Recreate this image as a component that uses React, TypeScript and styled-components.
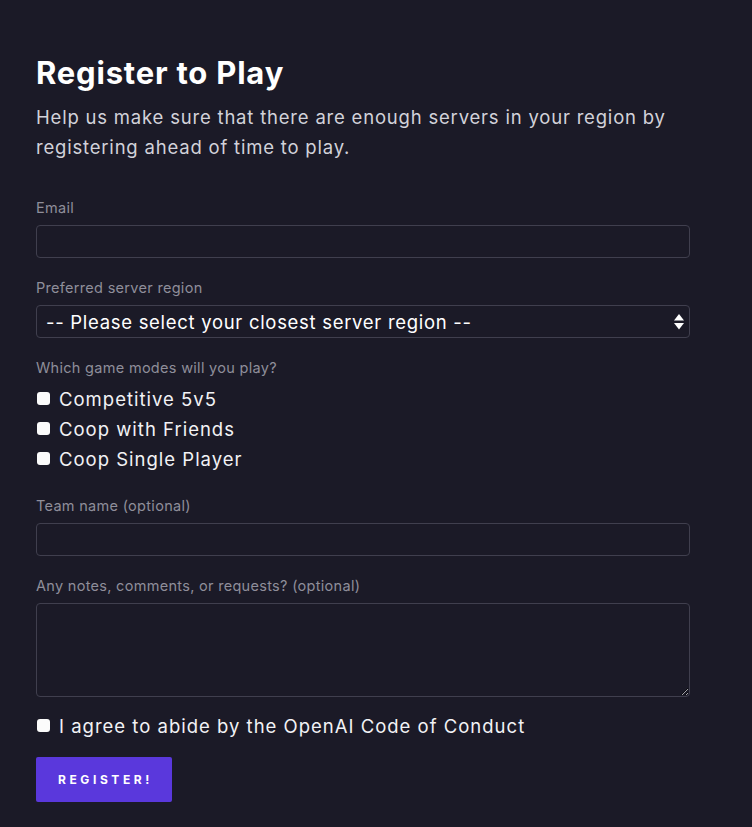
import React from "react";
import styled, { createGlobalStyle } from "styled-components";

const Global = createGlobalStyle`
  html, body { margin: 0; padding: 0; background: #1b1a27; }
  body { font-family: Inter, "Noto Sans", sans-serif; color: #fff; }
  * { box-sizing: border-box; }
`;

const Page = styled.main`
  padding: 52px 62px 40px 36px;
  min-height: 827px;
  background: #1b1a27;
`;

const Title = styled.h1`
  margin: 0;
  font-size: 31px;
  font-weight: 700;
  line-height: 42px;
  color: #ffffff;
  letter-spacing: 0.8px;
`;

const Lead = styled.p`
  margin: 8px 0 0;
  font-size: 18.5px;
  line-height: 30px;
  color: #d2d2da;
  letter-spacing: 0.8px;
  max-width: 654px;
`;

const Form = styled.form`
  margin-top: 36px;
  display: flex;
  flex-direction: column;
  width: 654px;
`;

const Field = styled.div<{ $gap?: number }>`
  display: flex;
  flex-direction: column;
  margin-bottom: ${(p) => p.$gap ?? 20}px;
`;

const Label = styled.label<{ $tight?: boolean }>`
  font-size: 14.5px;
  line-height: 20px;
  color: #8f8e9a;
  letter-spacing: 0.3px;
  margin-bottom: ${(p) => (p.$tight ? 6 : 7)}px;
`;

const Input = styled.input`
  height: 33px;
  width: 100%;
  background: #1b1a27;
  border: 1px solid #403f4e;
  border-radius: 4px;
  color: #fff;
  font: inherit;
  padding: 0 8px;
  outline: none;
`;

const SelectWrap = styled.div`
  position: relative;
  height: 33px;
`;

const Select = styled.select`
  appearance: none;
  -webkit-appearance: none;
  width: 100%;
  height: 33px;
  background: #1b1a27;
  border: 1px solid #403f4e;
  border-radius: 4px;
  color: #fff;
  font-family: Inter, "Noto Sans", sans-serif;
  font-size: 18.5px;
  letter-spacing: 0.7px;
  padding: 0 30px 0 9px;
  outline: none;
`;

const Arrows = styled.svg`
  position: absolute;
  right: 4px;
  top: 8px;
  pointer-events: none;
`;

const CheckRow = styled.label`
  display: flex;
  align-items: center;
  height: 30px;
  font-size: 18.5px;
  color: #f2f2f5;
  letter-spacing: 1px;
  gap: 9px;
`;

const Box = styled.input`
  appearance: none;
  -webkit-appearance: none;
  width: 13px;
  height: 13px;
  margin: 0 0 0 1px;
  background: #fbfbfb;
  border-radius: 3px;
  border: none;
  flex: none;
  position: relative;
  top: -1px;
`;

const TextArea = styled.textarea`
  height: 94px;
  width: 100%;
  background: #1b1a27;
  border: 1px solid #403f4e;
  border-radius: 4px;
  color: #fff;
  font: inherit;
  padding: 8px;
  outline: none;
  display: block;
`;

const Button = styled.button`
  align-self: flex-start;
  margin-top: 16px;
  width: 136px;
  height: 45px;
  background: #5a38dc;
  border: none;
  border-radius: 2px;
  color: #ffffff;
  font-family: Inter, "Noto Sans", sans-serif;
  font-size: 12px;
  font-weight: 700;
  letter-spacing: 3.6px;
  padding: 0 0 0 3px;
`;

const modes = ["Competitive 5v5", "Coop with Friends", "Coop Single Player"];

export default function App() {
  return (
    <>
      <Global />
      <Page>
        <Title>Register to Play</Title>
        <Lead>
          Help us make sure that there are enough servers in your region by
          registering ahead of time to play.
        </Lead>
        <Form onSubmit={(e) => e.preventDefault()}>
          <Field>
            <Label>Email</Label>
            <Input type="email" />
          </Field>
          <Field>
            <Label>Preferred server region</Label>
            <SelectWrap>
              <Select defaultValue="">
                <option value="">-- Please select your closest server region --</option>
              </Select>
              <Arrows width="14" height="18" viewBox="0 0 14 18">
                <path d="M7 1 L12 7.5 L2 7.5 Z" fill="#fff" />
                <path d="M2 10 L12 10 L7 16.5 Z" fill="#fff" />
              </Arrows>
            </SelectWrap>
          </Field>
          <Field $gap={22}>
            <Label $tight>Which game modes will you play?</Label>
            {modes.map((m) => (
              <CheckRow key={m}>
                <Box type="checkbox" />
                {m}
              </CheckRow>
            ))}
          </Field>
          <Field>
            <Label>Team name (optional)</Label>
            <Input type="text" />
          </Field>
          <Field $gap={14}>
            <Label>Any notes, comments, or requests? (optional)</Label>
            <TextArea />
          </Field>
          <CheckRow>
            <Box type="checkbox" />
            I agree to abide by the OpenAI Code of Conduct
          </CheckRow>
          <Button type="submit">REGISTER!</Button>
        </Form>
      </Page>
    </>
  );
}
